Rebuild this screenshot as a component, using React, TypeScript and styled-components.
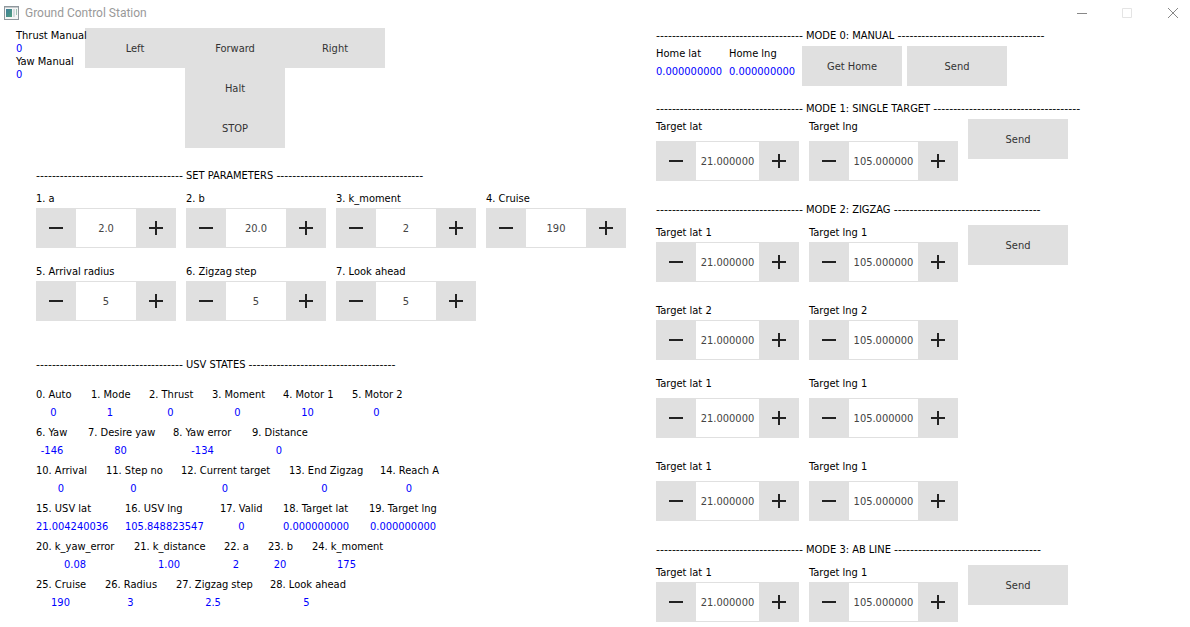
import React, { useId, useState } from "react";
import styled, { createGlobalStyle } from "styled-components";

const GlobalStyle = createGlobalStyle`
  *, *::before, *::after { box-sizing: border-box; }
  body {
    margin: 0;
    background: #fff;
    color: #000;
    font-family: "DejaVu Sans Condensed", "DejaVu Sans", sans-serif;
    font-size: 11px;
    line-height: 18px;
  }
  button, input { font: inherit; }
`;

const TitleBar = styled.header`
  display: flex;
  align-items: center;
  height: 26px;
  padding-left: 4px;
  gap: 6px;
`;

const Title = styled.h1`
  flex: 1;
  margin: 0;
  font-family: Roboto, sans-serif;
  font-size: 12px;
  font-weight: 400;
  color: #999;
`;

const WindowButtons = styled.div`
  display: flex;
  gap: 12px;
`;

const WindowButton = styled.button<{ $tone: string }>`
  display: grid;
  place-items: center;
  width: 34px;
  height: 24px;
  padding: 0;
  border: 0;
  background: none;
  color: ${(p) => p.$tone};
`;

const Main = styled.main`
  display: grid;
  grid-template-columns: 640fr 550fr;
  padding-top: 1px;
`;

const Column = styled.div`
  padding-left: 16px;
`;

const ManualPanel = styled.section`
  display: flex;
  padding-top: 1px;
`;

const ManualReadouts = styled.dl`
  position: relative;
  z-index: 1;
  width: 69px;
  margin: 0;
  padding-top: 1px;
  line-height: 13px;
  white-space: nowrap;
`;

const ReadoutName = styled.dt``;

const ReadoutValue = styled.dd`
  margin: 0;
  color: #00f;
`;

const DrivePad = styled.div`
  display: grid;
  grid-template-columns: repeat(3, 100px);
  & > :nth-child(n + 4) {
    grid-column: 2;
  }
`;

const PushButton = styled.button`
  width: 100px;
  height: 40px;
  padding: 2px 0 0;
  border: 0;
  background: #e0e0e0;
  color: #333;
`;

const Indented = styled.div`
  padding: 19px 0 0 20px;
`;

const HeadingLine = styled.h2<{ $gap?: number }>`
  margin: 0 0 ${(p) => p.$gap ?? 0}px;
  font-size: 11px;
  font-weight: 400;
  white-space: nowrap;
`;

const Dashes = styled.span`
  font-family: "DejaVu Sans", sans-serif;
`;

const ParameterGrid = styled.div`
  display: grid;
  grid-template-columns: repeat(4, 140px);
  gap: 15px 10px;
  margin-bottom: 35px;
`;

const Field = styled.div<{ $gap: number }>`
  display: flex;
  flex-direction: column;
  gap: ${(p) => p.$gap}px;
`;

const StepperBox = styled.div<{ $inner: number }>`
  display: grid;
  grid-template-columns: 40px ${(p) => p.$inner}px 40px;
  height: 40px;
`;

const StepButton = styled.button`
  display: grid;
  place-items: center;
  padding: 0;
  border: 0;
  background: #e0e0e0;
  color: #222;
`;

const StepInput = styled.input`
  min-width: 0;
  width: 100%;
  padding: 2px 0 0;
  border: solid #e0e0e0;
  border-width: 1px 0;
  background: #fff;
  color: #444;
  text-align: center;
`;

const StateRow = styled.dl`
  display: flex;
  gap: 20px;
  margin: 0 0 2px;
  white-space: nowrap;
`;

const StateCell = styled.div<{ $width: number }>`
  width: ${(p) => p.$width}px;
`;

const StateValue = styled(ReadoutValue)`
  text-align: center;
`;

const HomeRow = styled.div`
  display: flex;
  margin-bottom: 14px;
`;

const HomeReadouts = styled.dl`
  display: grid;
  grid-template-columns: repeat(2, 63px);
  gap: 10px;
  margin: 0 10px 0 0;
`;

const HomeButtons = styled.div`
  display: flex;
  gap: 5px;
  padding-top: 1px;
`;

const TargetRow = styled.div<{ $after?: number }>`
  display: flex;
  align-items: flex-start;
  gap: 10px;
  margin-bottom: ${(p) => p.$after ?? 20}px;
`;

const SendSlot = styled.div`
  padding-top: 1px;
`;

function Icon({ d, size, width }: { d: string; size: number; width: number }) {
  return (
    <svg width={size} height={size} viewBox={`0 0 ${size} ${size}`} fill="none" stroke="currentColor" strokeWidth={width} aria-hidden="true">
      <path d={d} />
    </svg>
  );
}

function AppIcon() {
  return (
    <svg width="15" height="14" viewBox="0 0 15 14" aria-hidden="true">
      <defs>
        <linearGradient id="screen" x1="0" y1="0" x2="1" y2="1">
          <stop offset="0" stopColor="#3f7f9c" />
          <stop offset="1" stopColor="#4f9d7c" />
        </linearGradient>
      </defs>
      <rect x="0.5" y="0.5" width="14" height="13" fill="#f6f6f6" stroke="#8f979c" />
      <path d="M1 1.5h13" stroke="#c4c9cc" />
      <rect x="2" y="3" width="6" height="8" fill="url(#screen)" />
      <rect x="9" y="3" width="2" height="8" fill="#d5dcdf" />
      <rect x="12" y="3" width="1" height="6" fill="#9fc3b4" />
    </svg>
  );
}

const DASHES = "-".repeat(37);

function Heading({ children, gap }: { children: string; gap?: number }) {
  return (
    <HeadingLine $gap={gap}>
      <Dashes>{DASHES}</Dashes> {children} <Dashes>{DASHES}</Dashes>
    </HeadingLine>
  );
}

type StepperProps = { label: string; initial: string; inner?: number; gap?: number };

function Stepper({ label, initial, inner = 60, gap = 0 }: StepperProps) {
  const id = useId();
  const [value, setValue] = useState(initial);
  const decimals = (initial.split(".")[1] ?? "").length;
  const step = (by: number) => setValue((v) => (Number(v) + by).toFixed(decimals));
  return (
    <Field $gap={gap}>
      <label htmlFor={id}>{label}</label>
      <StepperBox $inner={inner}>
        <StepButton type="button" aria-label={`Decrease ${label}`} onClick={() => step(-1)}>
          <Icon size={14} width={2} d="M0 7h14" />
        </StepButton>
        <StepInput id={id} value={value} onChange={(e) => setValue(e.target.value)} />
        <StepButton type="button" aria-label={`Increase ${label}`} onClick={() => step(1)}>
          <Icon size={14} width={2} d="M0 7h14M7 0v14" />
        </StepButton>
      </StepperBox>
    </Field>
  );
}

type TargetProps = { suffix?: string; gap?: number; after?: number; send?: boolean };

function Target({ suffix = "", gap, after, send }: TargetProps) {
  return (
    <TargetRow $after={after}>
      <Stepper label={`Target lat${suffix}`} initial="21.000000" inner={63} gap={gap} />
      <Stepper label={`Target lng${suffix}`} initial="105.000000" inner={69} gap={gap} />
      {send && (
        <SendSlot>
          <PushButton type="button">Send</PushButton>
        </SendSlot>
      )}
    </TargetRow>
  );
}

const PARAMETERS = [
  ["1. a", "2.0"],
  ["2. b", "20.0"],
  ["3. k_moment", "2"],
  ["4. Cruise", "190"],
  ["5. Arrival radius", "5"],
  ["6. Zigzag step", "5"],
  ["7. Look ahead", "5"],
];

// Name, value and column width of each telemetry item
type State = [name: string, value: string, width: number];

const STATES: State[][] = [
  [["0. Auto", "0", 35], ["1. Mode", "1", 38], ["2. Thrust", "0", 43], ["3. Moment", "0", 51], ["4. Motor 1", "10", 49], ["5. Motor 2", "0", 49]],
  [["6. Yaw", "-146", 32], ["7. Desire yaw", "80", 65], ["8. Yaw error", "-134", 59], ["9. Distance", "0", 54]],
  [["10. Arrival", "0", 50], ["11. Step no", "0", 55], ["12. Current target", "0", 88], ["13. End Zigzag", "0", 71], ["14. Reach A", "0", 58]],
  [["15. USV lat", "21.004240036", 69], ["16. USV lng", "105.848823547", 75], ["17. Valid", "0", 43], ["18. Target lat", "0.000000000", 66], ["19. Target lng", "0.000000000", 68]],
  [["20. k_yaw_error", "0.08", 78], ["21. k_distance", "1.00", 70], ["22. a", "2", 24], ["23. b", "20", 24], ["24. k_moment", "175", 69]],
  [["25. Cruise", "190", 49], ["26. Radius", "3", 51], ["27. Zigzag step", "2.5", 74], ["28. Look ahead", "5", 73]],
];

export default function App() {
  return (
    <>
      <GlobalStyle />
      <TitleBar>
        <AppIcon />
        <Title>Ground Control Station</Title>
        <WindowButtons>
          <WindowButton type="button" aria-label="Minimize" $tone="#888">
            <Icon size={11} width={1} d="M1 5.5h10" />
          </WindowButton>
          <WindowButton type="button" aria-label="Maximize" $tone="#e4e4e4" disabled>
            <Icon size={10} width={1} d="M.5 .5h9v9h-9z" />
          </WindowButton>
          <WindowButton type="button" aria-label="Close" $tone="#888">
            <Icon size={10} width={1} d="M0 0l10 10M10 0L0 10" />
          </WindowButton>
        </WindowButtons>
      </TitleBar>
      <Main>
        <Column>
          <ManualPanel>
            <ManualReadouts>
              <ReadoutName>Thrust Manual</ReadoutName>
              <ReadoutValue>0</ReadoutValue>
              <ReadoutName>Yaw Manual</ReadoutName>
              <ReadoutValue>0</ReadoutValue>
            </ManualReadouts>
            <DrivePad>
              {["Left", "Forward", "Right", "Halt", "STOP"].map((name) => (
                <PushButton type="button" key={name}>{name}</PushButton>
              ))}
            </DrivePad>
          </ManualPanel>
          <Indented>
            <Heading gap={5}>SET PARAMETERS</Heading>
            <ParameterGrid>
              {PARAMETERS.map(([label, value]) => (
                <Stepper key={label} label={label} initial={value} />
              ))}
            </ParameterGrid>
            <Heading gap={12}>USV STATES</Heading>
            {STATES.map((row, i) => (
              <StateRow key={i}>
                {row.map(([name, value, width]) => (
                  <StateCell key={name} $width={width}>
                    <ReadoutName>{name}</ReadoutName>
                    <StateValue>{value}</StateValue>
                  </StateCell>
                ))}
              </StateRow>
            ))}
          </Indented>
        </Column>
        <Column>
          <Heading>MODE 0: MANUAL</Heading>
          <HomeRow>
            <HomeReadouts>
              {["Home lat", "Home lng"].map((name) => (
                <div key={name}>
                  <ReadoutName>{name}</ReadoutName>
                  <ReadoutValue>0.000000000</ReadoutValue>
                </div>
              ))}
            </HomeReadouts>
            <HomeButtons>
              <PushButton type="button">Get Home</PushButton>
              <PushButton type="button">Send</PushButton>
            </HomeButtons>
          </HomeRow>
          <Heading>MODE 1: SINGLE TARGET</Heading>
          <Target gap={5} send />
          <Heading gap={5}>MODE 2: ZIGZAG</Heading>
          <Target suffix=" 1" send />
          <Target suffix=" 2" after={15} />
          <Target suffix=" 1" gap={5} />
          <Target suffix=" 1" gap={5} />
          <Heading gap={5}>MODE 3: AB LINE</Heading>
          <Target suffix=" 1" after={0} send />
        </Column>
      </Main>
    </>
  );
}
